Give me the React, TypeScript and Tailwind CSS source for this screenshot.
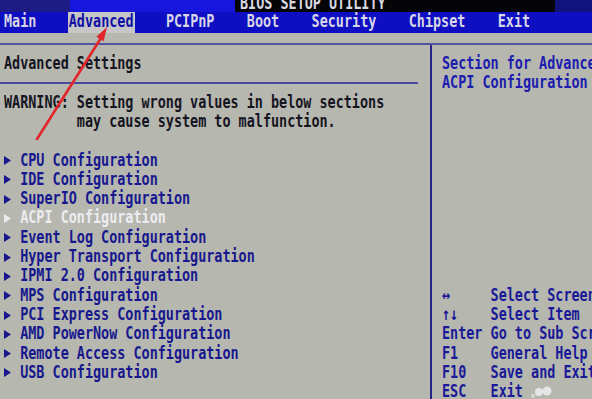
import React from 'react';

const ROW = 'h-[19.3px] flex items-center whitespace-pre';

const T = ({ children, className = '' }: { children: React.ReactNode; className?: string }) => (
  <span className={`inline-block scale-y-[1.3] whitespace-pre ${className}`}>{children}</span>
);

const Tri = ({ color }: { color: string }) => (
  <span className="inline-flex w-[16.2px] shrink-0 items-center">
    <svg width="7" height="9" viewBox="0 0 7 9">
      <polygon points="0,0 7,4.5 0,9" fill={color} />
    </svg>
  </span>
);

const menus = ['Main', 'Advanced', 'PCIPnP', 'Boot', 'Security', 'Chipset', 'Exit'];

const items = [
  'CPU Configuration',
  'IDE Configuration',
  'SuperIO Configuration',
  'ACPI Configuration',
  'Event Log Configuration',
  'Hyper Transport Configuration',
  'IPMI 2.0 Configuration',
  'MPS Configuration',
  'PCI Express Configuration',
  'AMD PowerNow Configuration',
  'Remote Access Configuration',
  'USB Configuration',
];

const keys = [
  ['↔', 'Select Screen'],
  ['↑↓', 'Select Item'],
  ['Enter', 'Go to Sub Screen'],
  ['F1', 'General Help'],
  ['F10', 'Save and Exit'],
  ['ESC', 'Exit'],
];

export default function App() {
  return (
    <div
      className="relative w-[592px] h-[399px] overflow-hidden bg-[#b6b7af] text-[13.45px] font-bold"
      style={{ fontFamily: '"DejaVu Sans Mono", "Liberation Mono", monospace' }}
    >
      {/* title strip, cut off at the top */}
      <div className="h-[12px] flex overflow-hidden">
        <div className="w-[70px] bg-[#1c1c84]" />
        <div className="w-[165px] bg-[#1616dc]" />
        <div className="flex-1 bg-[#050508] pl-[5px] flex items-end overflow-hidden">
          <div className="leading-[12px] mb-[2.5px] text-[#d8d8e0]">
            <T>BIOS SETUP UTILITY</T>
          </div>
        </div>
        <div className="w-[37px] bg-[#12127c]" />
      </div>

      {/* menu bar */}
      <div className="h-[21px] bg-[#0e0ec2] flex items-stretch gap-[32.4px] px-[4px]">
        {menus.map((m) => (
          <div
            key={m}
            className={
              m === 'Advanced'
                ? 'flex items-center bg-[#c6c6c6] text-[#1010a8] -mx-[1px] px-[1px]'
                : 'flex items-center text-[#d6d6e6]'
            }
          >
            <T>{m}</T>
          </div>
        ))}
      </div>

      <div className="h-[10px]" />
      <div className="h-[2px] bg-[#5454a0]" />

      <div className="flex h-[354px]">
        {/* left column */}
        <div className="w-[430px] shrink-0 pt-[9.5px] pl-[4px] flex flex-col">
          <div className={`${ROW} text-[#15151f]`}>
            <T>Advanced Settings</T>
          </div>
          <div className={ROW}>
            <div className="-ml-[4px] w-[418px] h-[2px] bg-[#4a4a9c]" />
          </div>
          <div className={`${ROW} text-[#15151f]`}>
            <T>WARNING: Setting wrong values in below sections</T>
          </div>
          <div className={`${ROW} text-[#15151f]`}>
            <T>         may cause system to malfunction.</T>
          </div>
          <div className={ROW} />
          {items.map((it) => {
            const sel = it === 'ACPI Configuration';
            return (
              <div key={it} className={`${ROW} ${sel ? 'text-[#ececf0]' : 'text-[#17178e]'}`}>
                <Tri color={sel ? '#ececf0' : '#17178e'} />
                <T>{it}</T>
              </div>
            );
          })}
        </div>

        <div className="w-[2px] shrink-0 bg-[#24248a]" />

        {/* right column */}
        <div className="flex-1 min-w-0 overflow-hidden pt-[9.5px] pl-[10px] flex flex-col text-[#1c1cae]">
          <div className={ROW}>
            <T>Section for Advanced</T>
          </div>
          <div className={ROW}>
            <T>ACPI Configuration</T>
          </div>
          <div className="h-[193px] shrink-0" />
          {keys.map(([k, d]) => (
            <div key={k} className={`${ROW} shrink-0 text-[#1a1a98]`}>
              <span className="w-[48.6px] shrink-0">
                <T>{k}</T>
              </span>
              <T>{d}</T>
            </div>
          ))}
        </div>
      </div>

      {/* red annotation arrow */}
      <svg className="absolute left-0 top-0 pointer-events-none" width="592" height="399">
        <line x1="37" y1="139" x2="101" y2="38" stroke="#e2262c" strokeWidth="2.6" strokeLinecap="round" />
        <polygon points="107,27 103.6,41.2 96.4,36.8" fill="#e2262c" />
      </svg>

      {/* faint watermark blobs */}
      <svg className="absolute left-[530px] top-[384px] pointer-events-none" width="24" height="15">
        <circle cx="9" cy="8" r="4" fill="#f4f4f4" opacity="0.75" />
        <circle cx="17" cy="7" r="4.5" fill="#f4f4f4" opacity="0.75" />
        <circle cx="3" cy="12" r="2" fill="#f4f4f4" opacity="0.5" />
      </svg>
    </div>
  );
}
